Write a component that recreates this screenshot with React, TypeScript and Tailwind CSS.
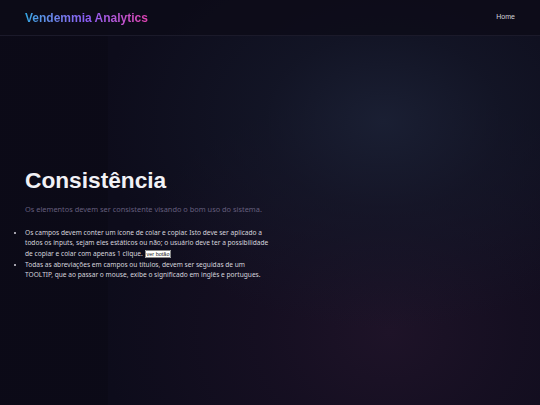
export default function App() {
  return (
    <div className="min-h-screen w-full bg-[#0d0c1b] bg-[linear-gradient(90deg,rgba(8,7,16,0.35)_0%,rgba(8,7,16,0.35)_20%,transparent_20%),radial-gradient(ellipse_at_71%_30%,#1a1f33_0%,rgba(22,26,44,0.6)_22%,transparent_52%),radial-gradient(ellipse_at_72%_82%,#1e1328_0%,rgba(30,18,40,0.5)_22%,transparent_52%)] font-['Noto_Sans',sans-serif]">
      {/* Header */}
      <header className="flex h-[36px] items-center justify-between border-b border-[#1b1a2a] bg-[#0c0b18]/80 px-[25px]">
        <span className="bg-linear-to-r from-[#2fa3e0] via-[#8b5cf6] to-[#e040b0] bg-clip-text font-['Liberation_Sans',Arial,sans-serif] text-[12px] font-bold text-transparent">
          Vendemmia Analytics
        </span>
        <nav className="font-['Liberation_Sans',Arial,sans-serif] text-[7px] text-[#d4d4dc]">
          Home
        </nav>
      </header>

      {/* Main */}
      <main className="px-[25px] pt-[133px]">
        <h1 className="font-['Liberation_Sans',Arial,sans-serif] text-[22.7px] leading-none font-bold text-[#f1f1f5]">
          Consistência
        </h1>

        <p className="mt-[12px] text-[7.4px] text-[#645e7d]">
          Os elementos devem ser consistente visando o bom uso do sistema.
        </p>

        <ul className="mt-[13px] w-[245px] list-disc pl-0 text-[6.6px] leading-[10.6px] text-[#d6d5de] marker:text-[#d6d5de]">
          <li>
            Os campos devem conter um ícone de colar e copiar. Isto deve ser
            aplicado a todos os inputs, sejam eles estáticos ou não; o usuário
            deve ter a possibilidade de copiar e colar com apenas 1 clique.{" "}
            <span className="rounded-[1px] border border-[#888] bg-white px-[1px] font-['Liberation_Sans',Arial,sans-serif] text-[5.5px] leading-none text-[#222]">
              ver botão
            </span>
          </li>
          <li>
            Todas as abreviações em campos ou títulos, devem ser seguidas de um
            TOOLTIP, que ao passar o mouse, exibe o significado em inglês e
            portugues.
          </li>
        </ul>
      </main>
    </div>
  );
}
